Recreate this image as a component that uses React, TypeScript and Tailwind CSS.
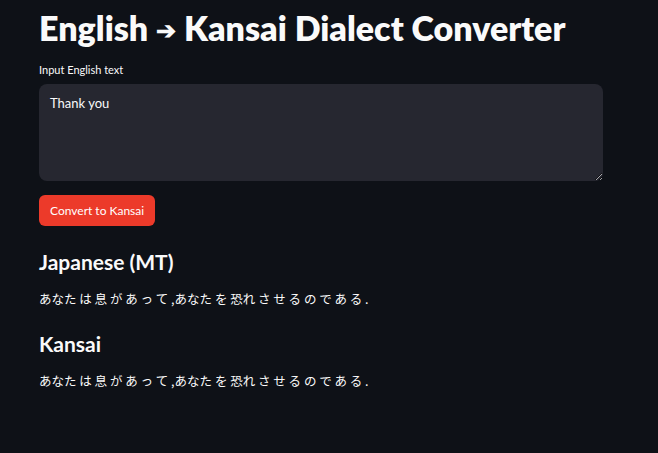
import { useState } from 'react';

// Streamlit-ish dark page: English -> Kansai converter
export default function App() {
    const [text, setText] = useState('Thank you');
    const jp = 'あなた は 息 が あ っ て ,あなた を 恐れ さ せ る の で あ る .';

    return (
        <div className="min-h-[453px] w-full bg-[#0e1117] text-[#fafafa] font-['Lato','Noto_Sans_CJK_JP',sans-serif]">
            <div className="w-[564px] ml-[39px] pt-[8px]">
                <h1 className="text-[34px] leading-[40px] font-extrabold whitespace-nowrap">
                    English <span className="font-['Noto_Sans',sans-serif] text-[24px] font-bold align-[2px]">➔</span> Kansai Dialect Converter
                </h1>

                <label className="block mt-[12px] text-[11px] leading-[16px] text-[#fafafa]">Input English text</label>
                <textarea
                    value={text}
                    onChange={(e) => setText(e.target.value)}
                    className="block mt-[6px] w-full h-[97px] rounded-lg bg-[#262730] px-[11px] py-[10px] text-[13px] leading-[18px] text-[#fafafa] outline-none"
                />

                <button className="mt-[14px] h-[31px] px-[11px] rounded-md bg-[#ec3a2a] text-white text-[12px]">
                    Convert to Kansai
                </button>

                <h2 className="mt-[22px] text-[21px] leading-[28px] font-bold">Japanese (MT)</h2>
                <p className="mt-[13px] text-[12.5px] leading-[20px] font-['Noto_Sans_CJK_JP',sans-serif]">{jp}</p>

                <h2 className="mt-[21px] text-[21px] leading-[28px] font-bold">Kansai</h2>
                <p className="mt-[13px] text-[12.5px] leading-[20px] font-['Noto_Sans_CJK_JP',sans-serif]">{jp}</p>
            </div>
        </div>
    );
}
